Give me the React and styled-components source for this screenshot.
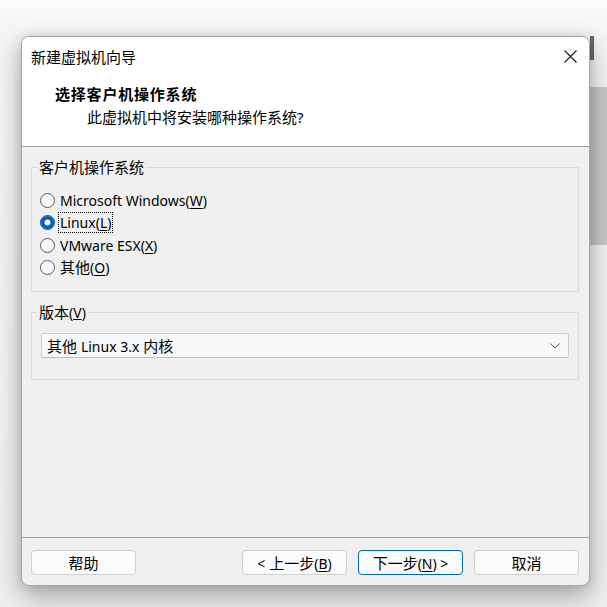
import React, { useState } from 'react';
import styled, { createGlobalStyle, css } from 'styled-components';

const GlobalStyle = createGlobalStyle`
  html, body {
    margin: 0;
    padding: 0;
    background: #f3f3f3;
  }
  * {
    box-sizing: border-box;
  }
`;

const FONT = `"Noto Sans", "Noto Sans CJK SC", sans-serif`;

const osList = [
  { id: 'win', label: 'Microsoft Windows', key: 'W', latin: true },
  { id: 'linux', label: 'Linux', key: 'L', latin: true },
  { id: 'esx', label: 'VMware ESX', key: 'X', latin: true },
  { id: 'other', label: '其他', key: 'O' }
];

function Mnemonic({ text, k, latin }) {
  return (
    <>
      {latin ? <Lat>{text}</Lat> : text}
      <Lat>
        (<u>{k}</u>)
      </Lat>
    </>
  );
}

export default function App() {
  const [os, setOs] = useState('linux');

  return (
    <Desktop>
      <GlobalStyle />
      <BgTitle>UNOSTATION</BgTitle>
      <BgScroll />
      <BgPanel />
      <Dialog>
        <Header>
          <TitleBar>
            <Title>新建虚拟机向导</Title>
            <CloseButton aria-label="关闭">
              <svg width="13" height="13" viewBox="0 0 13 13">
                <path d="M0.5 0.5 L12.5 12.5 M12.5 0.5 L0.5 12.5" stroke="#1a1a1a" strokeWidth="1.1" fill="none" />
              </svg>
            </CloseButton>
          </TitleBar>
          <Heading>选择客户机操作系统</Heading>
          <SubHeading>此虚拟机中将安装哪种操作系统?</SubHeading>
        </Header>

        <Body>
          <GroupBox $pad="12px 8px 12px 8px">
            <Legend $shift="-3px">客户机操作系统</Legend>
            {osList.map((o) => (
              <RadioRow key={o.id} onClick={() => setOs(o.id)}>
                <RadioCircle $checked={os === o.id} />
                <RadioLabel $focused={os === o.id}>
                  <Mnemonic text={o.label} k={o.key} latin={o.latin} />
                </RadioLabel>
              </RadioRow>
            ))}
          </GroupBox>

          <GroupBox $pad="10px 9px 21px 9px" $top="10px">
            <Legend $shift="-4px">
              <Mnemonic text="版本" k="V" />
            </Legend>
            <Select>
              <span>
                其他 <Lat>Linux 3.x</Lat> 内核
              </span>
              <svg width="10" height="6" viewBox="0 0 10 6">
                <path d="M0.5 0.5 L5 5 L9.5 0.5" stroke="#555" strokeWidth="1" fill="none" />
              </svg>
            </Select>
          </GroupBox>
        </Body>

        <Footer>
          <Button>帮助</Button>
          <ButtonGroup>
            <Button>
              <Lat>&lt;</Lat> 上一步<Lat>(<u>B</u>)</Lat>
            </Button>
            <Button $primary>
              下一步<Lat>(<u>N</u>) &gt;</Lat>
            </Button>
            <Button>取消</Button>
          </ButtonGroup>
        </Footer>
      </Dialog>
    </Desktop>
  );
}

const Desktop = styled.div`
  position: relative;
  width: 607px;
  height: 607px;
  overflow: hidden;
  background: linear-gradient(#fbfbfb 0, #f4f4f4 40px, #efefef 100%);
  font-family: ${FONT};
`;

const Lat = styled.span`
  font-size: 14px;
`;

const BgTitle = styled.div`
  position: absolute;
  left: 330px;
  top: 31px;
  font-family: "Liberation Sans", sans-serif;
  font-size: 26px;
  font-weight: bold;
  letter-spacing: 6px;
  color: #9a9a9a;
`;

const BgScroll = styled.div`
  position: absolute;
  left: 590px;
  top: 36px;
  width: 4px;
  height: 24px;
  background: #6a6a6a;
`;

const BgPanel = styled.div`
  position: absolute;
  left: 590px;
  top: 87px;
  width: 17px;
  height: 158px;
  background: #c7c7c7;
`;

const Dialog = styled.div`
  position: absolute;
  left: 21px;
  top: 36px;
  width: 569px;
  height: 550px;
  display: flex;
  flex-direction: column;
  background: #f0f0f0;
  border: 1px solid #a6a6a6;
  border-radius: 8px;
  overflow: hidden;
  box-shadow: 0 10px 26px rgba(0, 0, 0, 0.32), 0 0 10px rgba(0, 0, 0, 0.1);
`;

const Header = styled.div`
  height: 110px;
  flex-shrink: 0;
  background: #ffffff;
  border-bottom: 1px solid #a0a0a0;
`;

const TitleBar = styled.div`
  height: 39px;
  display: flex;
  align-items: center;
  justify-content: space-between;
  padding: 0 12px 0 9px;
`;

const Title = styled.div`
  font-size: 15px;
  color: #000;
`;

const CloseButton = styled.div`
  width: 13px;
  height: 13px;
  display: flex;
  svg {
    display: block;
  }
`;

const Heading = styled.div`
  margin-top: 8px;
  padding-left: 33px;
  font-size: 15px;
  line-height: 20px;
  font-weight: bold;
  letter-spacing: 0.8px;
  color: #000;
`;

const SubHeading = styled.div`
  margin-top: 3px;
  padding-left: 65px;
  font-size: 15px;
  line-height: 20px;
  color: #000;
`;

const Body = styled.div`
  flex: 1;
  padding: 0 10px 0 9px;
`;

const GroupBox = styled.fieldset`
  margin: ${(p) => p.$top || '10px'} 0 0 0;
  padding: ${(p) => p.$pad};
  border: 1px solid #dcdcdc;
  border-radius: 0;
  min-width: 0;
`;

const Legend = styled.legend`
  margin-left: ${(p) => p.$shift};
  padding: 0 2px;
  font-size: 15px;
  line-height: 20px;
  color: #000;
`;

const RadioRow = styled.div`
  height: 22.5px;
  display: flex;
  align-items: center;
  gap: 4px;
  cursor: default;
`;

const RadioCircle = styled.span`
  width: 15px;
  height: 15px;
  border-radius: 50%;
  flex-shrink: 0;
  ${(p) =>
    p.$checked
      ? css`
          background: #005fb8;
          border: 1px solid #005fb8;
          box-shadow: inset 0 0 0 3.5px #005fb8, inset 0 0 0 8px #ffffff;
        `
      : css`
          background: #f7f7f7;
          border: 1px solid #5a5a5a;
        `}
`;

const RadioLabel = styled.span`
  font-size: 15px;
  line-height: 19px;
  color: #000;
  padding: 0 1px;
  outline: ${(p) => (p.$focused ? '1px dotted #000' : 'none')};
  u {
    text-underline-offset: 2px;
  }
`;

const Select = styled.div`
  height: 25px;
  display: flex;
  align-items: center;
  justify-content: space-between;
  padding: 0 8px 0 5px;
  background: #f7f8fa;
  border: 1px solid #c9ced6;
  border-bottom-color: #b9bec6;
  border-radius: 2px;
  font-size: 15px;
  color: #000;
`;

const Footer = styled.div`
  flex-shrink: 0;
  display: flex;
  justify-content: space-between;
  padding: 12px 10px 10px 9px;
  border-top: 1px solid #a0a0a0;
`;

const ButtonGroup = styled.div`
  display: flex;
  gap: 11px;
`;

const Button = styled.button`
  width: 105px;
  height: 25px;
  padding: 0;
  font-family: ${FONT};
  font-size: 15px;
  color: #000;
  background: #fbfbfb;
  border: 1px solid ${(p) => (p.$primary ? '#0067c0' : '#d0d0d0')};
  border-radius: 4px;
  u {
    text-underline-offset: 2px;
  }
`;
